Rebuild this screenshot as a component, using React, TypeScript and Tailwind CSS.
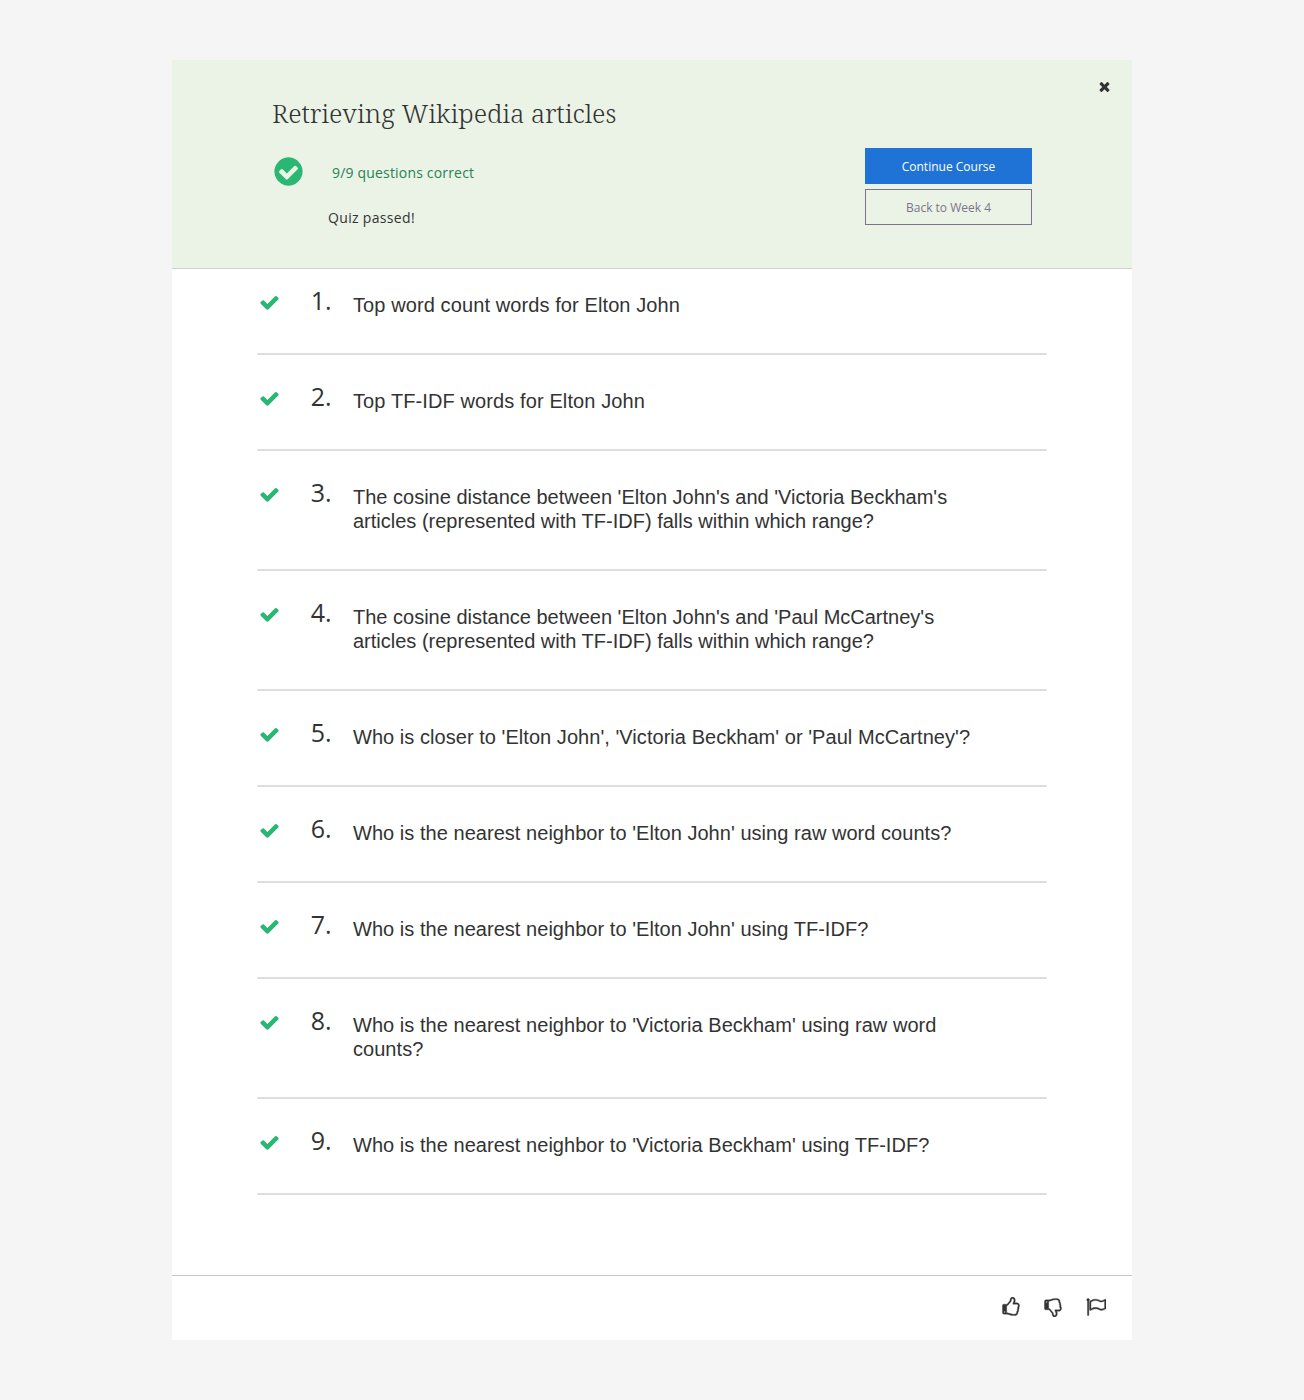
import React from "react";

const CHECK =
  "M1671 566q0 40-28 68l-724 724-136 136q-28 28-68 28t-68-28l-136-136-362-362q-28-28-28-68t28-68l136-136q28-28 68-28t68 28l294 295 656-657q28-28 68-28t68 28l136 136q28 28 28 68z";
const CHECK_CIRCLE =
  "M1412 734q0-28-18-46l-91-90q-19-19-45-19t-45 19l-408 407-226-226q-19-19-45-19t-45 19l-91 90q-18 18-18 46 0 27 18 45l362 362q19 19 45 19 27 0 46-19l543-543q18-18 18-45zm252 162q0 209-103 385.500t-279.500 279.500-385.500 103-385.500-103-279.500-279.500-103-385.500 103-385.500 279.500-279.500 385.500-103 385.500 103 279.500 279.500 103 385.500z";
const TIMES =
  "M1490 1322q0 40-28 68l-136 136q-28 28-68 28t-68-28l-294-294-294 294q-28 28-68 28t-68-28l-136-136q-28-28-28-68t28-68l294-294-294-294q-28-28-28-68t28-68l136-136q28-28 68-28t68 28l294 294 294-294q28-28 68-28t68 28l136 136q28 28 28 68t-28 68l-294 294 294 294q28 28 28 68z";
const THUMB_UP =
  "M384 1344q0-26-19-45t-45-19-45 19-19 45 19 45 45 19 45-19 19-45zm1152-576q0-51-39-89.500t-89-38.500h-352q0-58 48-159.500t48-160.500q0-98-32-145t-128-47q-26 26-38 85t-30.500 125.500-59.500 109.500q-22 23-77 91-4 5-23 30t-31.500 41-34.500 42.500-40 44-38.500 35.500-40 27-35.500 9h-32v640h32q13 0 31.500 3t33 6.500 38 11 35 11.500 35.500 12.500 29 10.500q211 73 342 73h121q192 0 192-167 0-26-5-56 30-16 47.500-52.500t17.500-73.500-18-69q53-50 53-119 0-25-10-55.500t-25-47.500q32-1 53.500-47t21.500-81zm128-1q0 89-49 163 9 33 9 69 0 77-38 144 3 21 3 43 0 101-60 178 1 139-85 219.500t-227 80.500h-129q-96 0-189.500-22.500t-216.500-65.500q-116-40-138-40h-288q-53 0-90.500-37.500t-37.500-90.500v-640q0-53 37.500-90.500t90.500-37.500h274q36-24 137-155 58-75 107-128 24-25 35.500-85.500t30.500-126.500 62-108q39-37 90-37 84 0 151 32.500t102 101.500 35 186q0 93-48 192h176q104 0 180 76t76 179z";
const THUMB_DOWN =
  "M384 448q0-26-19-45t-45-19-45 19-19 45 19 45 45 19 45-19 19-45zm1152 576q0-35-21.500-81t-53.500-47q15-17 25-47.500t10-55.500q0-69-53-119 18-31 18-69 0-37-17.500-73.500t-47.500-52.500q5-30 5-56 0-85-49-126t-136-41h-128q-131 0-342 73-5 2-29 10.500t-35.500 12.500-35 11.500-38 11-33 6.500-31.500 3h-32v640h32q16 0 35.500 9t40 27 38.500 35.500 40 44 34.500 42.500 31.500 41 23 30q55 68 77 91 41 43 59.500 109.500t30.500 125.500 38 85q96 0 128-47t32-145q0-59-48-160.500t-48-159.500h352q50 0 89-38.500t39-89.500zm128 1q0 103-76 179t-180 76h-176q48 99 48 192 0 118-35 186-35 69-102 101.500t-151 32.500q-51 0-90-37-34-33-54-82t-25.500-90.500-17.500-84.500-31-64q-48-50-107-127-101-131-137-155h-274q-53 0-90.500-37.500t-37.500-90.500v-640q0-53 37.500-90.500t90.500-37.500h288q22 0 138-40 128-44 223-66t200-22h112q140 0 226.500 79t85.500 216v5q60 77 60 178 0 22-3 43 38 67 38 144 0 36-9 69 49 74 49 163z";
const FLAG =
  "M1664 977v-616q-169 91-306 91-82 0-145-32-100-49-184-76.500t-178-27.500q-173 0-403 127v599q245-113 433-113 55 0 103.500 7.500t98 26 77 31 82.500 39.500l28 14q44 22 101 22 120 0 293-92zm-1344-721q0 35-17.500 64t-46.500 46v1266q0 14-9 23t-23 9h-64q-14 0-23-9t-9-23v-1266q-29-17-46.500-46t-17.500-64q0-53 37.500-90.500t90.500-37.500 90.500 37.500 37.500 90.500zm1472 0v763q0 39-35 57-10 5-17 9-218 116-369 116-88 0-158-35l-28-14q-64-33-99-48t-91-29-114-14q-102 0-235.500 44t-228.500 102q-15 9-33 9-16 0-32-8-32-19-32-56v-742q0-35 31-55 35-21 78.500-42.500t114-52 152.500-49.500 155-19q112 0 209 31t209 86q38 19 89 19 122 0 310-112 22-12 31-17 31-16 62 2 31 20 31 54z";

function Icon({ d, className }: { d: string; className: string }) {
  return (
    <svg viewBox="0 0 1792 1792" fill="currentColor" className={className} aria-hidden="true">
      <path d={d} />
    </svg>
  );
}

const questions = [
  { text: "Top word count words for Elton John", tracking: "tracking-[0.1px]" },
  { text: "Top TF-IDF words for Elton John", tracking: "tracking-[0.11px]" },
  {
    text: "The cosine distance between 'Elton John's and 'Victoria Beckham's articles (represented with TF-IDF) falls within which range?",
    tracking: "tracking-normal",
  },
  {
    text: "The cosine distance between 'Elton John's and 'Paul McCartney's articles (represented with TF-IDF) falls within which range?",
    tracking: "tracking-normal",
  },
  {
    text: "Who is closer to 'Elton John', 'Victoria Beckham' or 'Paul McCartney'?",
    tracking: "tracking-[0.045px]",
  },
  {
    text: "Who is the nearest neighbor to 'Elton John' using raw word counts?",
    tracking: "tracking-[0.04px]",
  },
  {
    text: "Who is the nearest neighbor to 'Elton John' using TF-IDF?",
    tracking: "tracking-[0.04px]",
  },
  {
    text: "Who is the nearest neighbor to 'Victoria Beckham' using raw word counts?",
    tracking: "tracking-[0.04px]",
  },
  {
    text: "Who is the nearest neighbor to 'Victoria Beckham' using TF-IDF?",
    tracking: "tracking-[0.04px]",
  },
];

function Header() {
  return (
    <header className="relative flex h-[209px] justify-between border-b border-[#cdd6c8] bg-[#ebf3e6] px-[100px]">
      <div className="pt-[35px]">
        <h1 className="h-9 whitespace-nowrap font-['Noto_Serif','DejaVu_Serif',serif] text-[26px] font-light leading-9 tracking-[-0.06px]">
          Retrieving Wikipedia articles
        </h1>
        <div className="mt-[25px] flex h-8 items-center">
          <Icon d={CHECK_CIRCLE} className="-mt-px size-[33px] text-[#2ab673]" />
          <span className="ml-[27px] mt-0.5 text-sm tracking-[0.18px] text-[#1f8354]">
            9/9 questions correct
          </span>
        </div>
        <p className="mt-5 pl-14 text-sm leading-5 tracking-[0.33px]">Quiz passed!</p>
      </div>
      <div className="flex w-[167px] flex-col gap-[5px] pt-[88px]">
        <button className="h-9 bg-[#2073d6] pt-0.5 text-xs text-white">Continue Course</button>
        <button className="h-9 border border-[#7b738b] pt-0.5 text-xs text-[#7b738b]">Back to Week 4</button>
      </div>
      <button aria-label="Close" className="absolute right-5 top-[19px]">
        <Icon d={TIMES} className="size-[15px]" />
      </button>
    </header>
  );
}

export default function App() {
  return (
    <div className="min-h-[1400px] bg-[#f5f5f5] py-[60px] font-['Open_Sans',sans-serif] text-[#333]">
      <div className="mx-auto flex h-[1280px] w-[960px] flex-col bg-white">
        <Header />
        <ol className="mx-auto w-[790px] flex-1">
          {questions.map(({ text, tracking }, i) => (
            <li key={text} className="flex border-b-2 border-[#dedede] pb-9 pt-[34px] first:pt-6">
              <Icon d={CHECK} className="-mt-px ml-0.5 size-[21px] shrink-0 text-[#2ab673]" />
              <span className="-mt-[5px] h-6 w-[51.5px] text-right text-[25px] leading-6">{i + 1}.</span>
              <p
                className={`ml-[21.5px] w-[620px] font-['Liberation_Sans',Arial,sans-serif] text-xl leading-6 ${tracking}`}
              >
                {text}
              </p>
            </li>
          ))}
        </ol>
        <footer className="flex h-[65px] items-center justify-end gap-[22px] border-t border-[#c7c7c7] stroke-current stroke-[30] pb-0.5 pr-[26px]">
          <Icon d={THUMB_UP} className="size-5" />
          <Icon d={THUMB_DOWN} className="size-5" />
          <Icon d={FLAG} className="ml-px size-5" />
        </footer>
      </div>
    </div>
  );
}
